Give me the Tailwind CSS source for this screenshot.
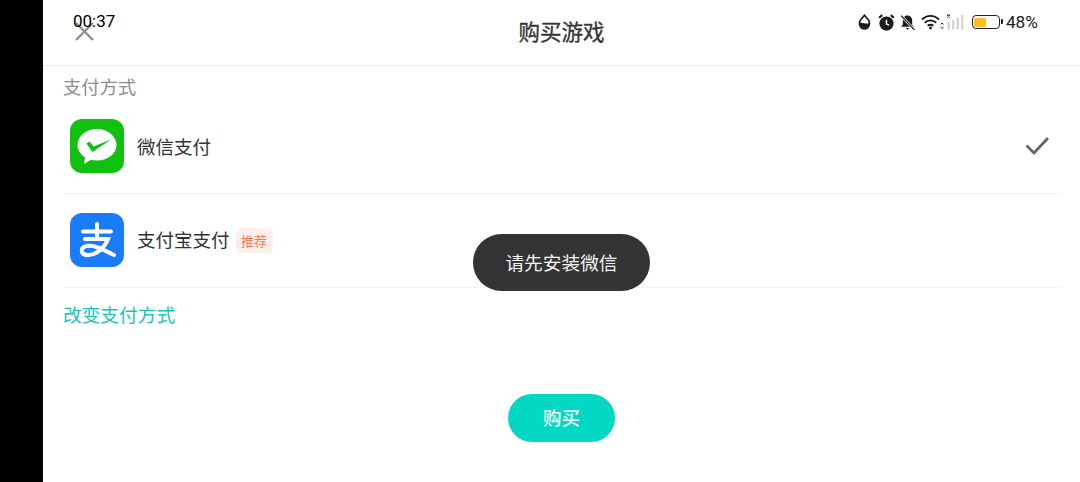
<!DOCTYPE html>
<html lang="zh">
<head>
    <meta charset="UTF-8">
    <title>购买游戏</title>
    <script src="https://cdn.jsdelivr.net/npm/@tailwindcss/browser@4"></script>
</head>
<body class="bg-white w-[1080px] h-[482px] overflow-hidden flex font-['Noto_Sans_CJK_SC','Noto_Sans',sans-serif]">
    <!-- left black strip -->
    <div class="w-[43px] h-full bg-black shrink-0"></div>

    <div class="relative flex-1 h-full flex flex-col">
        <!-- header -->
        <div class="relative h-[66px] border-b border-[#ececec] flex items-center justify-center pb-[4px] shrink-0">
            <svg class="absolute left-[32px] top-[22px] w-[19px] h-[19px]" viewBox="0 0 19 19" fill="none" stroke="#8f8f8f" stroke-width="2.4"><path d="M1 1L18 18M18 1L1 18"/></svg>
            <h1 class="text-[21.500px] leading-[28px] text-[#333] font-normal [-webkit-text-stroke:0.3px_#333]">购买游戏</h1>
        </div>

        <!-- status bar overlay -->
        <div class="absolute left-[30px] top-[10px] text-[17px] leading-[22px] text-black font-['Roboto',sans-serif]">00:37</div>
        <div class="absolute right-[42px] top-[11px] h-[22px] flex items-center">
            <svg class="w-[13px] h-[16px]" viewBox="0 0 13 16" fill="none" stroke="#1a1a1a" stroke-width="1.700"><path d="M6.500 1.300L10.300 5.800C12.600 8.600 11.200 14.800 6.500 14.800S.4 8.600 2.700 5.800Z"/><path d="M1.500 9C4 7.800 8 10.800 11.500 9V11C10 15 3 15 1.500 11Z" fill="#1a1a1a" stroke="none"/></svg>
            <svg class="w-[17px] h-[17px] ml-[7px]" viewBox="0 0 16 16"><circle cx="8" cy="9" r="6.700" fill="#1a1a1a"/><path d="M8 5.500V9.500L10.500 10.500" stroke="#fff" stroke-width="1.400" fill="none"/><path d="M1 3.500L4 1M15 3.500L12 1" stroke="#1a1a1a" stroke-width="2"/></svg>
            <svg class="w-[17px] h-[17px] ml-[4px]" viewBox="0 0 16 16"><path d="M8 1.500C5 1.500 3.600 4 3.600 6.500V10L2 12H14L12.400 10V6.500C12.400 4 11 1.500 8 1.500Z" fill="#1a1a1a"/><path d="M6.500 13.200H9.500L8 15Z" fill="#1a1a1a"/><path d="M2 1.500L14.500 15" stroke="#fff" stroke-width="2.400"/><path d="M2 1.500L14.500 15" stroke="#1a1a1a" stroke-width="1.200"/></svg>
            <svg class="w-[24px] h-[16px] ml-[5px]" viewBox="0 0 24 16" fill="none" stroke="#1a1a1a" stroke-width="1.900"><path d="M1 5.500C6 .7 13 .7 18 5.500"/><path d="M3.800 8.700C7 5.600 12 5.600 15.200 8.700"/><path d="M6.700 11.700C8 10.500 11 10.500 12.300 11.700"/><circle cx="9.500" cy="14" r="1.400" fill="#1a1a1a" stroke="none"/><path d="M19.500 10.500L21 9 22.500 10.500M19.500 13L21 14.500 22.500 13" stroke-width="0.900"/></svg>
            <svg class="w-[19px] h-[16px] ml-[1px]" viewBox="0 0 19 16"><path d="M1 .5L4 3.500M4 .5L1 3.500" stroke="#444" stroke-width="1.100"/><rect x="1.500" y="8" width="2.400" height="7.500" fill="#d4d4d4"/><rect x="6" y="6" width="2.400" height="9.500" fill="#d4d4d4"/><rect x="10.500" y="3.500" width="2.400" height="12" fill="#d4d4d4"/><rect x="15" y="1" width="2.400" height="14.500" fill="#d4d4d4"/></svg>
            <div class="relative ml-[7px] w-[28px] h-[14px] border-[1.500px] border-[#222] rounded-[4px] p-[1.500px] flex">
                <div class="w-[12px] h-full bg-[#fbbf2a] rounded-[1px]"></div>
                <div class="absolute right-[-4px] top-[3px] w-[2px] h-[5px] bg-[#222] rounded-r-[1px]"></div>
            </div>
            <span class="ml-[6px] text-[17.300px] leading-[22px] font-['Roboto',sans-serif] text-[#222]">48%</span>
        </div>

        <!-- payment section -->
        <div class="pl-[21px] pr-[19px] flex-1 flex flex-col">
            <div class="text-[18.300px] leading-[24px] text-[#8c8c8c] mt-[8px] -ml-[1px]">支付方式</div>

            <div class="h-[96px] pl-[6px] pr-[11px] flex items-center border-b border-[#f3f3f3]">
                <div class="w-[54px] h-[54px] rounded-[12px] bg-[#10c10f] flex items-center justify-center shrink-0">
                    <svg class="w-[44px] h-[40px]" viewBox="0 0 44 40"><path d="M22 3C11 3 2.500 10 2.500 19C2.500 24 5.500 28.500 10 31.300L9 38L16 33.800C18 34.300 20 34.500 22 34.500C33 34.500 41.500 27.500 41.500 19S33 3 22 3Z" fill="#fff"/><path d="M11.500 17.500L17.500 26L36 13.500L18.500 20.500L14.500 15.500Z" fill="#10c10f"/></svg>
                </div>
                <span class="ml-[13px] mt-[2px] text-[18.500px] text-[#333]">微信支付</span>
                <svg class="ml-auto w-[25px] h-[20px]" viewBox="0 0 25 20" fill="none" stroke="#666" stroke-width="2.800"><path d="M1.500 9.500L9 17L23 2"/></svg>
            </div>

            <div class="h-[94px] pb-[1px] pl-[6px] flex items-center border-b border-[#f3f3f3]">
                <div class="w-[54px] h-[54px] rounded-[12px] bg-[#1b7cf9] flex items-center justify-center shrink-0">
                    <svg class="w-[42px] h-[42px]" viewBox="0 0 42 42" fill="none" stroke="#fff" stroke-linecap="round"><path d="M7 12.500H35" stroke-width="4"/><path d="M21 5V18" stroke-width="4"/><path d="M9 20H32C29 28 20 37 11 36C4 35.300 4 28 11 27C20 25.500 29 32 38 36" stroke-width="4"/></svg>
                </div>
                <span class="ml-[13px] text-[18.500px] text-[#333]">支付宝支付</span>
                <span class="ml-[6px] w-[37px] h-[25px] mt-[1px] rounded-[6px] bg-[#fdeeea] text-[#ee7a55] text-[13px] flex items-center justify-center">推荐</span>
            </div>

            <div class="mt-[13px] -ml-[1px] text-[18.700px] leading-[26px] text-[#18c5b5]">改变支付方式</div>

            <button class="mt-[67px] self-center ml-[-2px] w-[107px] h-[48px] rounded-full bg-[#02d8c4] text-white text-[18.500px] font-medium">购买</button>
        </div>

        <!-- toast -->
        <div class="absolute left-[430px] top-[234px] w-[177px] h-[57px] rounded-full bg-[#343434] text-[#f2f2f2] text-[18.700px] flex items-center justify-center">请先安装微信</div>
    </div>
</body>
</html>
